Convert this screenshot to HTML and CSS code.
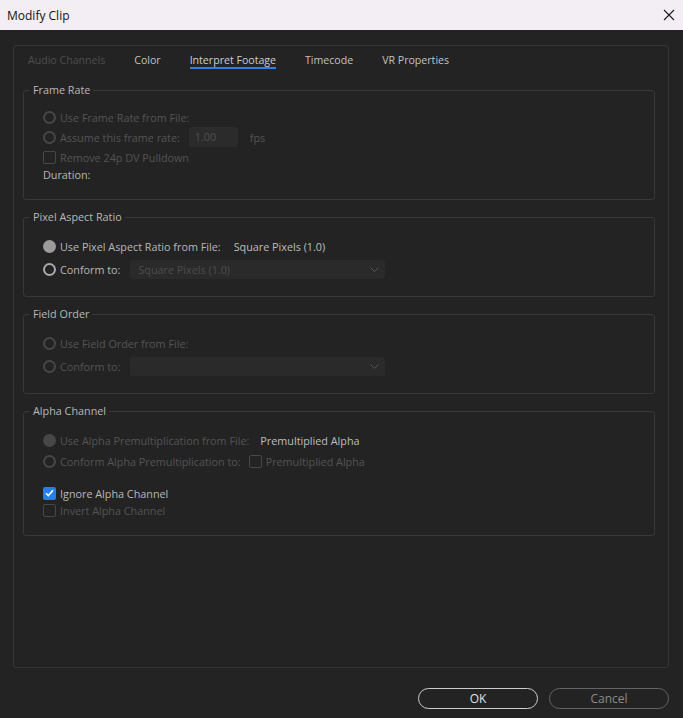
FILE: index.html
```html
<!DOCTYPE html>
<html lang="en">
<head>
    <meta charset="UTF-8">
    <title>Modify Clip</title>
    <link rel="stylesheet" href="styles.css">
</head>
<body>
    <div class="titlebar">
        <span class="title">Modify Clip</span>
        <svg class="close" width="12" height="12" viewBox="0 0 12 12">
            <path d="M1 1L11 11M11 1L1 11" stroke="#1a1a1a" stroke-width="1.1" fill="none"/>
        </svg>
    </div>

    <div class="dialog">
        <div class="panel">
            <div class="tabs">
                <span class="tab disabled">Audio Channels</span>
                <span class="tab">Color</span>
                <span class="tab active">Interpret Footage</span>
                <span class="tab">Timecode</span>
                <span class="tab">VR Properties</span>
            </div>

            <!-- Frame Rate -->
            <fieldset class="group frame-rate">
                <legend>Frame Rate</legend>
                <div class="rows">
                    <div class="row dim"><span class="radio"></span>Use Frame Rate from File:</div>
                    <div class="row dim">
                        <span class="radio"></span>Assume this frame rate:
                        <span class="num-input">1.00</span>
                        <span class="unit">fps</span>
                    </div>
                    <div class="row dim"><span class="check"></span>Remove 24p DV Pulldown</div>
                    <div class="row short">Duration:</div>
                </div>
            </fieldset>

            <!-- Pixel Aspect Ratio -->
            <fieldset class="group">
                <legend>Pixel Aspect Ratio</legend>
                <div class="rows">
                    <div class="row">
                        <span class="radio filled"></span>Use Pixel Aspect Ratio from File:
                        <span class="value">Square Pixels (1.0)</span>
                    </div>
                    <div class="row tall">
                        <span class="radio on"></span>Conform to:
                        <div class="select">
                            <span>Square Pixels (1.0)</span>
                            <svg width="9" height="5" viewBox="0 0 9 5"><path d="M0.5 0.5L4.5 4.5L8.5 0.5" stroke="#555" fill="none"/></svg>
                        </div>
                    </div>
                </div>
            </fieldset>

            <!-- Field Order -->
            <fieldset class="group">
                <legend>Field Order</legend>
                <div class="rows">
                    <div class="row dim"><span class="radio"></span>Use Field Order from File:</div>
                    <div class="row tall dim">
                        <span class="radio"></span>Conform to:
                        <div class="select">
                            <span></span>
                            <svg width="9" height="5" viewBox="0 0 9 5"><path d="M0.5 0.5L4.5 4.5L8.5 0.5" stroke="#555" fill="none"/></svg>
                        </div>
                    </div>
                </div>
            </fieldset>

            <!-- Alpha Channel -->
            <fieldset class="group alpha">
                <legend>Alpha Channel</legend>
                <div class="rows">
                    <div class="row dim">
                        <span class="radio filled-dim"></span>Use Alpha Premultiplication from File:
                        <span class="value alpha-value">Premultiplied Alpha</span>
                    </div>
                    <div class="row dim nudge">
                        <span class="radio"></span>Conform Alpha Premultiplication to:
                        <span class="check inline"></span>Premultiplied Alpha
                    </div>
                    <div class="row spaced">
                        <span class="check checked">
                            <svg width="9" height="8" viewBox="0 0 9 8"><path d="M1 4.2L3.4 6.6L8 1.2" stroke="#fff" stroke-width="1.6" fill="none"/></svg>
                        </span>Ignore Alpha Channel
                    </div>
                    <div class="row short dim"><span class="check"></span>Invert Alpha Channel</div>
                </div>
            </fieldset>
        </div>

        <div class="footer">
            <button class="btn primary">OK</button>
            <button class="btn">Cancel</button>
        </div>
    </div>
</body>
</html>
```

FILE: styles.css
```css
* {
    margin: 0;
    padding: 0;
    box-sizing: border-box;
}

body {
    width: 683px;
    height: 718px;
    background-color: #232323;
    font-family: 'Open Sans', 'Noto Sans', sans-serif;
    font-size: 10.8px;
    color: #b8b8b8;
    overflow: hidden;
}

.titlebar {
    height: 30px;
    background: #f3edf4;
    display: flex;
    align-items: center;
    justify-content: space-between;
    padding: 0 8px 0 7px;
    color: #111;
    font-size: 12px;
}

.dialog {
    padding: 15px 14px 0 13px;
}

.panel {
    height: 623px;
    border: 1px solid #363636;
    border-radius: 3px;
    padding: 0 13px 0 9px;
}

.tabs {
    display: flex;
    height: 37px;
    padding: 3px 0 0 5px;
    align-items: flex-start;
}

.tab {
    color: #c2c2c2;
    margin-right: 29px;
    height: 20px;
    line-height: 18px;
    padding-top: 2px;
    font-size: 10.6px;
}

.tab.disabled {
    color: #4d4d4d;
}

.tab.active {
    color: #cfcfcf;
    border-bottom: 2px solid #2d7fe0;
}

.group {
    border: 1px solid #383838;
    border-radius: 3px;
    padding: 0 6px;
    margin-bottom: 10px;
}

.group legend {
    padding: 0 3px;
    color: #b8b8b8;
    line-height: 14px;
}

.rows {
    padding: 12px 0 15px 13px;
}

.frame-rate .rows {
    padding-top: 10px;
    padding-bottom: 18px;
}

.alpha .rows {
    padding-bottom: 18px;
}

.row {
    display: flex;
    align-items: center;
    height: 20px;
    white-space: nowrap;
}

.row.tall {
    height: 24px;
    margin-top: 1px;
}

.row.short {
    height: 14px;
}

.row.nudge {
    margin-top: 1px;
}

.row.spaced {
    margin-top: 12px;
}

.dim {
    color: #545454;
}

.radio {
    width: 13px;
    height: 13px;
    border: 2px solid #474747;
    border-radius: 50%;
    margin-right: 4px;
    flex-shrink: 0;
}

.radio.on {
    border-color: #a9a9a9;
}

.radio.filled {
    border: none;
    background: #9b9b9b;
}

.radio.filled-dim {
    border: none;
    background: #474747;
}

.check {
    width: 13px;
    height: 13px;
    border: 1.5px solid #474747;
    border-radius: 2px;
    margin-right: 4px;
    flex-shrink: 0;
    display: flex;
    align-items: center;
    justify-content: center;
}

.check.inline {
    margin-left: 8px;
}

.check.checked {
    border: none;
    background: #2680eb;
}

.num-input {
    width: 49px;
    height: 20px;
    background: #2b2b2b;
    border-radius: 2px;
    margin-left: 9px;
    padding-left: 6px;
    line-height: 20px;
    color: #505050;
}

.unit {
    margin-left: 12px;
}

.value {
    color: #bdbdbd;
    margin-left: 13px;
}

.alpha-value {
    margin-left: 11px;
}

.select {
    width: 255px;
    height: 19px;
    margin-left: 10px;
    background: #2a2a2a;
    border-radius: 3px;
    display: flex;
    align-items: center;
    justify-content: space-between;
    padding: 0 6px 0 8px;
    color: #4d4d4d;
}

.footer {
    display: flex;
    justify-content: flex-end;
    gap: 11px;
    padding-top: 20px;
}

.btn {
    width: 120px;
    height: 21px;
    border-radius: 11px;
    background: transparent;
    border: 1.5px solid #636363;
    color: #8a8a8a;
    font-family: 'Open Sans', 'Noto Sans', sans-serif;
    font-size: 12px;
    line-height: 17px;
}

.btn.primary {
    border-color: #cdcdcd;
    color: #e0e0e0;
}
```
